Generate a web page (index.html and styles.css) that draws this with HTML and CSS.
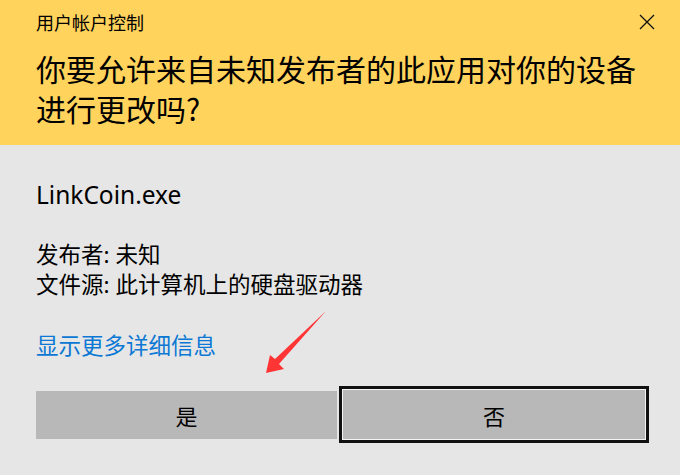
FILE: index.html
```html
<!DOCTYPE html>
<html lang="zh-CN">
<head>
<meta charset="utf-8">
<title>用户帐户控制</title>
<link rel="stylesheet" href="styles.css">
</head>
<body>
<div class="dialog">
  <header class="header">
    <div class="title-row">
      <span class="title">用户帐户控制</span>
      <span class="close" aria-label="关闭">
        <svg width="16" height="16" viewBox="0 0 16 16"><path d="M1 1 L15 15 M15 1 L1 15" stroke="#111" stroke-width="1.3" fill="none"/></svg>
      </span>
    </div>
    <h1 class="question">你要允许来自未知发布者的此应用对你的设备进行更改吗?</h1>
  </header>
  <main class="content">
    <div class="app-name">LinkCoin.exe</div>
    <div class="info">
      <div>发布者: 未知</div>
      <div>文件源: 此计算机上的硬盘驱动器</div>
    </div>
    <a class="more" href="#">显示更多详细信息</a>
    <div class="buttons">
      <button class="btn btn-yes">是</button>
      <button class="btn btn-no">否</button>
    </div>
  </main>
  <svg class="arrow" width="680" height="475" viewBox="0 0 680 475">
    <polygon points="326,311 279,364 284,369 266,373 270,355 275,359" fill="#ff3535"/>
  </svg>
</div>
</body>
</html>
```

FILE: styles.css
```css
html, body {
  margin: 0;
  padding: 0;
}
body {
  width: 680px;
  height: 475px;
  overflow: hidden;
  background: #e6e6e6;
  font-family: "Noto Sans", "Noto Sans CJK SC", sans-serif;
  color: #000;
}
.dialog {
  position: relative;
  width: 680px;
  height: 475px;
}
.header {
  box-sizing: border-box;
  height: 145px;
  background: #ffd35c;
  padding: 10px 25px 0 36px;
}
.title-row {
  display: flex;
  justify-content: space-between;
  align-items: center;
  height: 24px;
}
.title {
  font-family: "Noto Sans CJK SC", sans-serif;
  font-size: 18px;
  line-height: 24px;
}
.close {
  display: flex;
  width: 16px;
  height: 16px;
}
.question {
  margin: 14px 0 0 0;
  max-width: 610px;
  font-family: "Noto Sans CJK SC", sans-serif;
  font-weight: normal;
  font-size: 30px;
  line-height: 40px;
}
.content {
  padding: 35px 0 0 36px;
}
.app-name {
  font-size: 24.5px;
  line-height: 30px;
}
.info {
  margin-top: 30px;
  font-size: 22.5px;
  line-height: 30px;
}
.more {
  display: block;
  margin-top: 31px;
  font-size: 22.5px;
  line-height: 30px;
  color: #0a78d4;
  text-decoration: none;
}
.buttons {
  display: flex;
  align-items: center;
  margin-top: 25px;
}
.btn {
  box-sizing: border-box;
  margin: 0;
  padding: 0;
  border: none;
  background: #b8b8b8;
  font-family: "Noto Sans CJK SC", sans-serif;
  font-size: 22px;
  color: #000;
}
.btn-yes {
  width: 301px;
  height: 48px;
}
.btn-no {
  width: 310px;
  height: 57px;
  margin-left: 2px;
  border: 3px solid #111;
  box-shadow: inset 0 0 0 1px #f4f4f4;
}
.arrow {
  position: absolute;
  left: 0;
  top: 0;
  pointer-events: none;
}
```
